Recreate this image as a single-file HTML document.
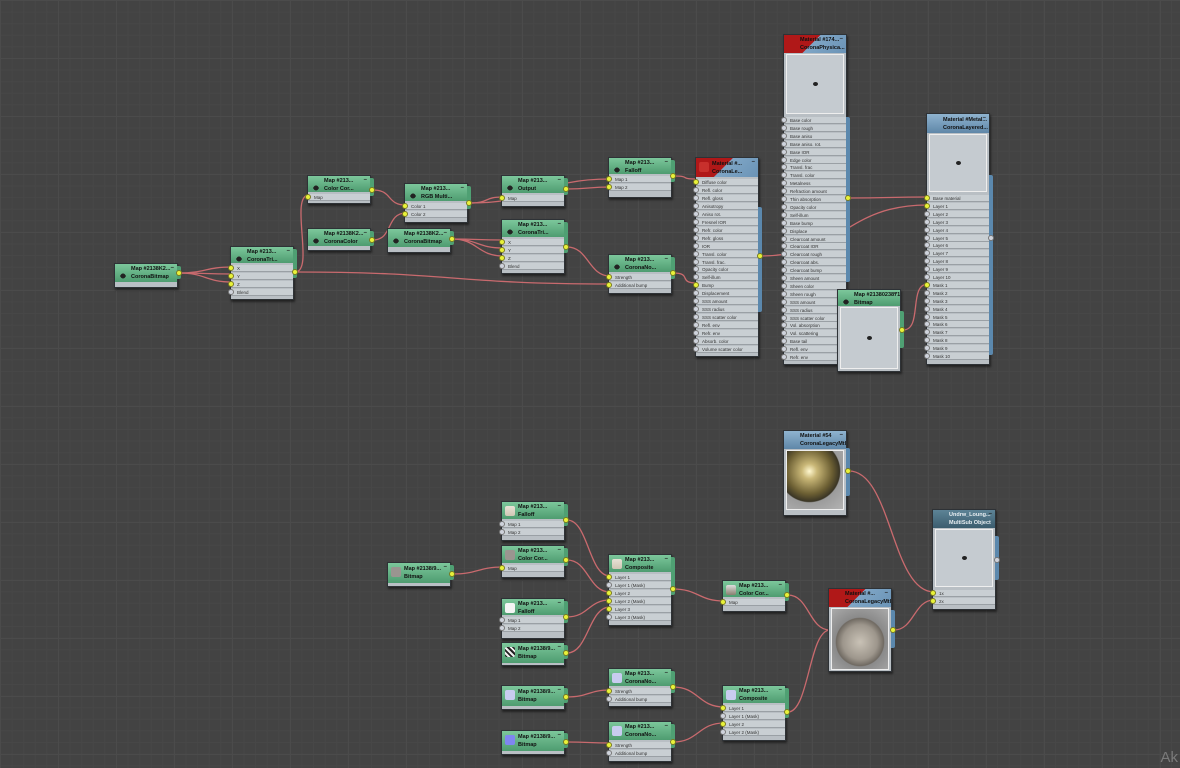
<!DOCTYPE html>
<html><head><meta charset="utf-8"><style>
html,body{margin:0;padding:0}
body{width:1180px;height:768px;overflow:hidden;position:relative;font-family:"Liberation Sans",sans-serif;
background-color:#434343;
background-image:linear-gradient(#4b4b4b 1px,transparent 1px),linear-gradient(90deg,#4b4b4b 1px,transparent 1px),linear-gradient(#474747 1px,transparent 1px),linear-gradient(90deg,#474747 1px,transparent 1px);
background-size:58px 58px,58px 58px,11.6px 11.6px,11.6px 11.6px;}
.n{position:absolute;background:#b9bfc4;border:1px solid #2e3236;box-shadow:1px 2px 2px rgba(0,0,0,.5)}
.h{position:absolute;left:0;right:0;top:0;color:#111;font-size:5.5px;font-weight:bold;line-height:8px;padding-left:16px;box-sizing:border-box;white-space:nowrap;overflow:hidden}
.g{background:linear-gradient(#7cc79b,#4e9c70)}
.b{background:linear-gradient(#8fb3cf,#5f87a8)}
.d{background:linear-gradient(#5d8396,#3b5d6e);color:#e8eef2}
.r{background:linear-gradient(135deg,#b01818 0,#b01818 45%,#7fa6c6 46%,#6a93b6 100%)}
.row{position:absolute;left:0;right:0;height:7px;border-bottom:1px solid #9aa0a5;background:#c9cfd3;font-size:4.5px;line-height:7px;padding-left:6px;box-sizing:border-box;color:#333;white-space:nowrap;overflow:hidden}
.s{position:absolute;width:6px;height:6px;border-radius:50%;background:#cfd3dc;border:1px solid #777;box-sizing:border-box}
.y{background:#e8f23a;border-color:#7a7a20}
.pv{position:absolute;background:#c5cbd0;border:1px solid #eee;box-sizing:border-box}
.bar{position:absolute;width:4px;background:#5b88ad;border-radius:0 2px 2px 0}
.gbar{position:absolute;width:4px;background:#4fa073;border-radius:0 2px 2px 0}
.ic{position:absolute;left:3px;top:4px;width:10px;height:10px;border-radius:2px;background:#dfe8e2}
.mn{position:absolute;right:3px;top:0;font-size:6px;color:#222}
</style></head><body>
<svg id="w" width="1180" height="768" style="position:absolute;left:0;top:0;z-index:1" fill="none" stroke="#c96a6e" stroke-width="1.3"></svg>
<div id="c" style="position:absolute;left:0;top:0;z-index:2"></div>
<div style="position:absolute;right:2px;bottom:2px;color:#7a7a7a;font-size:15px">Ak</div>
<script>
var C=document.getElementById('c'),W=document.getElementById('w');
function el(cls,st,txt){var d=document.createElement('div');d.className=cls;d.style.cssText=st;if(txt)d.textContent=txt;C.appendChild(d);return d;}
function sock(x,y,yel){el('s'+(yel?' y':''),'left:'+(x-3)+'px;top:'+(y-3)+'px;z-index:5');}
function N(x,y,w,hh,t,t1,t2,rows,conn,bottom,out,o){o=o||{};
 var n=el('n','left:'+x+'px;top:'+y+'px;width:'+w+'px;height:'+(bottom-y)+'px');
 var h=document.createElement('div');h.className='h '+t;h.style.height=hh+'px';h.style.paddingTop=(hh>18?2:1)+'px';h.innerHTML=t1+'<br>'+t2+'<span class="mn">–</span>';n.appendChild(h);
 if(o.thumb){var i=document.createElement('div');i.className='ic';i.style.background=o.thumb;n.appendChild(i);}
 else if(t=='g'){var i=document.createElement('div');i.className='ic';i.innerHTML='<svg width="10" height="10"><circle cx="5" cy="5" r="2.5" fill="#222"/><path d="M2 5h6" stroke="#222"/></svg>';i.style.background='none';n.appendChild(i);}
 var ry=hh+(o.pv||0)+(o.pv?4:2);
 if(o.pv){var p=document.createElement('div');p.className='pv';p.style.cssText='left:2px;right:2px;top:'+(hh+1)+'px;height:'+o.pv+'px;'+(o.pvbg?'background:'+o.pvbg:'');if(!o.pvbg)p.innerHTML='<div style="position:absolute;left:50%;top:50%;width:5px;height:4px;margin:-2px;background:#222;border-radius:50%"></div>';n.appendChild(p);}
 var sp=o.sp||7.95;
 for(var k=0;k<rows.length;k++){var r=document.createElement('div');r.className='row';r.style.top=(ry+k*sp)+'px';r.textContent=rows[k];n.appendChild(r);
   sock(x+1,y+ry+k*sp+4,conn.indexOf(k)>=0);}
 if(o.bar)el(o.bar[2]||'bar','left:'+(x+w+1)+'px;top:'+o.bar[0]+'px;height:'+(o.bar[1]-o.bar[0])+'px');
 else el(t=='g'?'gbar':'bar','left:'+(x+w+1)+'px;top:'+(y+3)+'px;height:'+(Math.min(bottom,out+8)-y-5)+'px');
 if(out)sock(x+w+3,out,!o.gout);
 return n;}
function L(x1,y1,x2,y2){var dx=Math.max(20,(x2-x1)/2);var p=document.createElementNS('http://www.w3.org/2000/svg','path');
 p.setAttribute('d','M'+x1+' '+y1+' C'+(x1+dx)+' '+y1+' '+(x2-dx)+' '+y2+' '+x2+' '+y2);W.appendChild(p);}
var G='g';
N(114,263,62,18,G,'Map #2138K2...','CoronaBitmap',[],[],286,273);
N(230,246,62,16,G,'Map #213...','CoronaTri...',['X','Y','Z','Blend'],[0,1,2],298,272);
N(307,175,62,16,G,'Map #213...','Color Cor...',['Map'],[0],202,190);
N(307,228,62,17,G,'Map #2138K2...','CoronaColor',[],[],249,240);
N(404,183,62,17,G,'Map #213...','RGB Multi...',['Color 1','Color 2'],[0,1],221,203);
N(387,228,62,18,G,'Map #2138K2...','CoronaBitmap',[],[],251,239);
N(501,175,62,17,G,'Map #213...','Output',['Map'],[0],205,189);
N(501,219,62,17,G,'Map #213...','CoronaTri...',['X','Y','Z','Blend'],[0,1,2],272,247);
N(608,157,62,16,G,'Map #213...','Falloff',['Map 1','Map 2'],[0,1],196,176);
N(608,254,62,17,G,'Map #213...','CoronaNo...',['Strength','Additional bump'],[0,1],292,273);
N(695,157,62,19,'r','Material #...','CoronaLe...',['Diffuse color','Refl. color','Refl. gloss','Anisotropy','Aniso rot.','Fresnel IOR','Refr. color','Refr. gloss','IOR','Transl. color','Transl. frac.','Opacity color','Self-illum','Bump','Displacement','SSS amount','SSS radius','SSS scatter color','Refl. env','Refr. env','Absorb. color','Volume scatter color'],[0,13],355,256,{thumb:'#c8302c',bar:[207,312],sp:7.95});
var mrows=['Base color','Base rough','Base aniso','Base aniso. rot.','Base IOR','Edge color','Transl. frac','Transl. color','Metalness','Refraction amount','Thin absorption','Opacity color','Self-illum','Base bump','Displace','Clearcoat amount','Clearcoat IOR','Clearcoat rough','Clearcoat abs.','Clearcoat bump','Sheen amount','Sheen color','Sheen rough','SSS amount','SSS radius','SSS scatter color','Vol. absorption','Vol. scattering','Base tail','Refl. env','Refr. env'];
N(783,34,62,18,'r','Material #174...','CoronaPhysica...',mrows,[],363,198,{pv:60,bar:[117,282],sp:7.9});
N(926,113,62,19,'b','Material #Metal...','CoronaLayered...',['Base material','Layer 1','Layer 2','Layer 3','Layer 4','Layer 5','Layer 6','Layer 7','Layer 8','Layer 9','Layer 10','Mask 1','Mask 2','Mask 3','Mask 4','Mask 5','Mask 6','Mask 7','Mask 8','Mask 9','Mask 10'],[0,1,11],363,238,{pv:58,bar:[175,355],gout:1,sp:7.9});
N(837,289,62,16,G,'Map #2138023871','Bitmap',[],[],370,330,{pv:62,bar:[311,348,'gbar']});
var T1='linear-gradient(#e8e2d6,#cfc6b4)',T2='#9a9590',T3='repeating-linear-gradient(45deg,#222 0 2px,#eee 2px 4px)',T4='#c8ccf0',T5='#7f86f0';
N(387,562,62,20,G,'Map #2138/9...','Bitmap',[],[],585,574,{thumb:T2});
N(501,501,62,17,G,'Map #213...','Falloff',['Map 1','Map 2'],[],539,520,{thumb:T1});
N(501,545,62,17,G,'Map #213...','Color Cor...',['Map'],[0],576,560,{thumb:T2});
N(501,598,62,16,G,'Map #213...','Falloff',['Map 1','Map 2'],[],637,617,{thumb:'#f4f4f4'});
N(501,642,62,20,G,'Map #2138/9...','Bitmap',[],[],664,653,{thumb:T3});
N(608,554,62,17,G,'Map #213...','Composite',['Layer 1','Layer 1 (Mask)','Layer 2','Layer 2 (Mask)','Layer 3','Layer 3 (Mask)'],[0,2,3,4],624,589,{thumb:T1});
N(722,580,62,16,G,'Map #213...','Color Cor...',['Map'],[0],610,595,{thumb:'linear-gradient(#ddd,#8a8070)'});
N(501,685,62,20,G,'Map #2138/9...','Bitmap',[],[],708,697,{thumb:T4});
N(608,668,62,17,G,'Map #213...','CoronaNo...',['Strength','Additional bump'],[0],705,687,{thumb:T4});
N(501,730,62,20,G,'Map #2138/9...','Bitmap',[],[],753,742,{thumb:T5});
N(608,721,62,18,G,'Map #213...','CoronaNo...',['Strength','Additional bump'],[0],760,742,{thumb:T4});
N(722,685,62,17,G,'Map #213...','Composite',['Layer 1','Layer 1 (Mask)','Layer 2','Layer 2 (Mask)'],[0,2],739,712,{thumb:T4});
N(783,430,62,18,'b','Material #54','CoronaLegacyMtl',[],[],514,471,{pv:60,pvbg:'radial-gradient(circle at 40% 35%,#fff8d0 0,#c9b777 15%,#6c5f33 45%,#3a3525 60%,#9b9b9b 62%,#b3b3b3 100%)',bar:[448,496]});
N(828,588,62,18,'r','Material #...','CoronaLegacyMtl',[],[],670,630,{pv:62,pvbg:'radial-gradient(circle at 50% 55%,#c9c2b6 0,#9d968c 40%,#706a62 55%,#8a8a8a 57%,#aaa 100%)',bar:[610,648]});
N(932,509,62,18,'d','Undrw_Loung...','MultiSub Object',['1x','2x'],[0,1],608,560,{pv:58,bar:[536,580],gout:1});
[[179,273,232,267],[179,273,232,274],[179,273,232,282],[295,272,309,195],[295,272,610,284],[373,190,406,205],[373,240,406,213],[452,239,503,240],[452,239,503,248],[452,239,503,256],[470,203,503,197],[470,203,610,179],[567,189,610,187],[567,247,610,276],[673,176,697,179],[673,273,697,283],[760,256,928,205],[849,198,928,197],[903,330,928,284],
[453,574,503,567],[567,520,610,576],[567,560,610,592],[567,617,610,600],[567,653,610,607],[673,589,724,601],[567,697,610,690],[567,742,610,743],[673,687,724,707],[673,742,724,723],[788,595,830,630],[788,712,830,630],[849,471,934,592],[894,630,934,600]].forEach(function(a){L.apply(null,a)});
</script>
</body></html>
